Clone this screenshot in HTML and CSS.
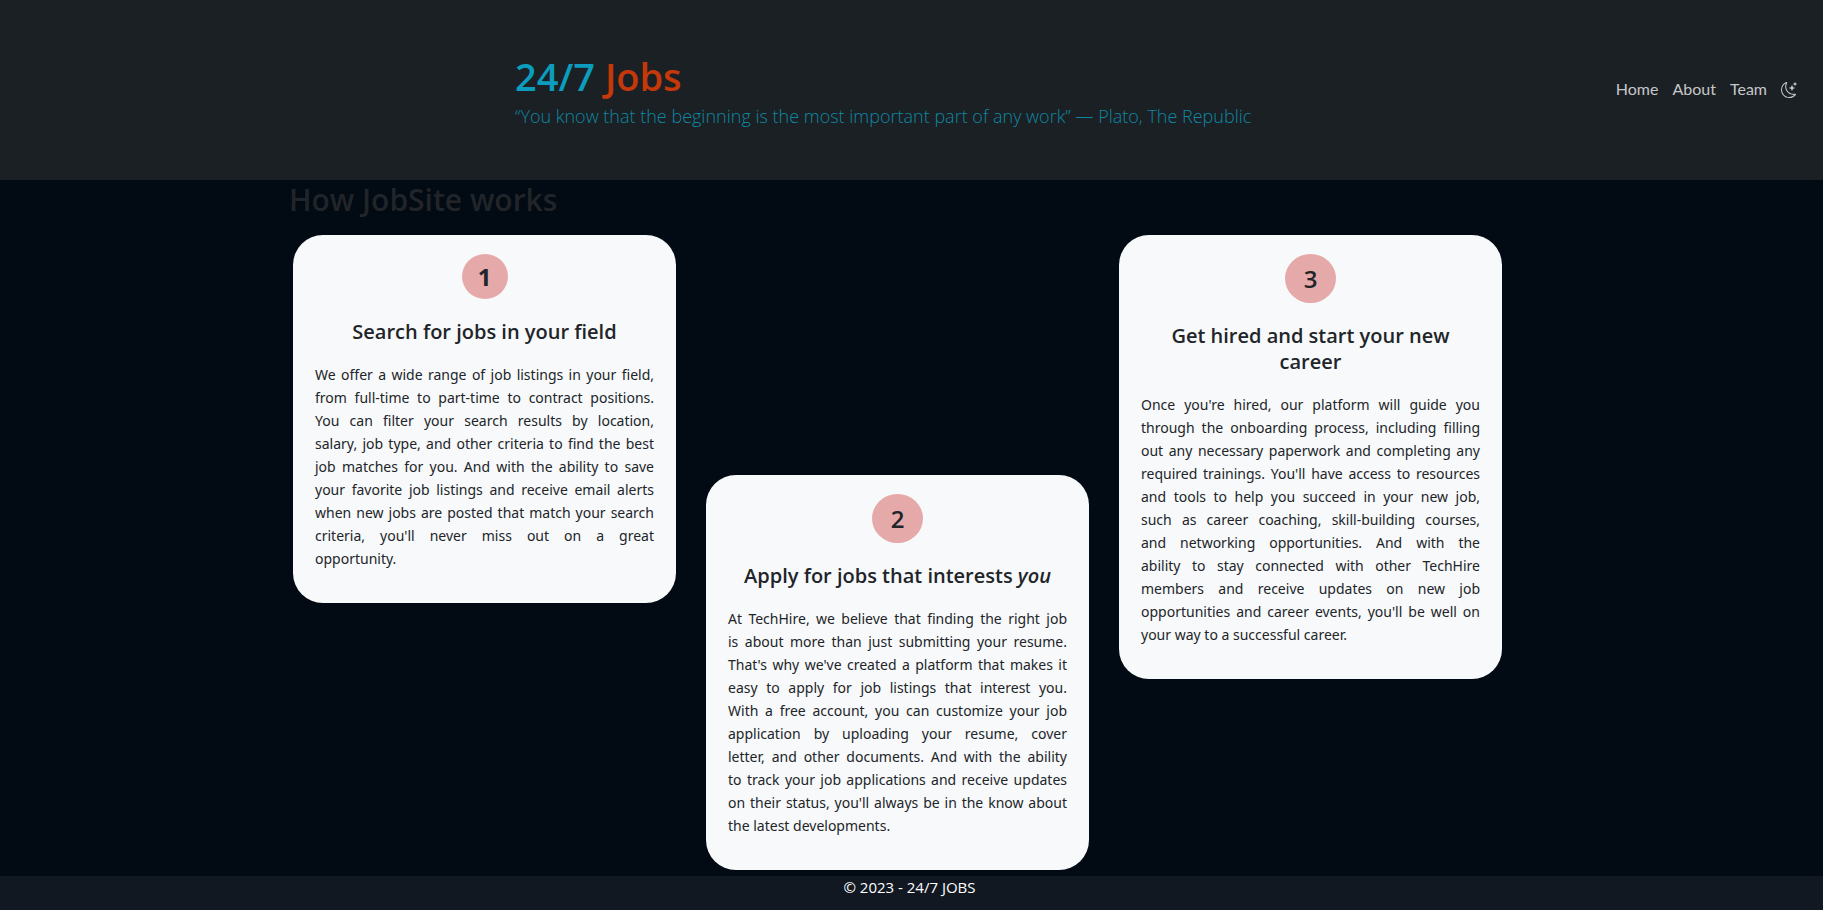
FILE: index.html
```html
<!DOCTYPE html>
<html lang="en">
<head>
<meta charset="utf-8">
<meta name="viewport" content="width=device-width, initial-scale=1">
<title>24/7 Jobs</title>
<link rel="stylesheet" href="styles.css">
</head>
<body>
<header class="site-header">
  <div class="brand">
    <h1 class="brand-name">24/7 <span class="brand-accent">Jobs</span></h1>
    <p class="tagline">“You know that the beginning is the most important part of any work” — Plato, The Republic</p>
  </div>
  <nav class="site-nav">
    <a href="#">Home</a>
    <a href="#">About</a>
    <a href="#">Team</a>
    <button class="theme-toggle" type="button" aria-label="Toggle theme">
      <svg viewBox="0 0 16 16" width="16" height="16" fill="currentColor" aria-hidden="true">
        <path d="M6 .278a.768.768 0 0 1 .08.858 7.208 7.208 0 0 0-.878 3.46c0 4.021 3.278 7.277 7.318 7.277.527 0 1.04-.055 1.533-.16a.787.787 0 0 1 .81.316.733.733 0 0 1-.031.893A8.349 8.349 0 0 1 8.344 16C3.734 16 0 12.286 0 7.71 0 4.266 2.114 1.312 5.124.06A.752.752 0 0 1 6 .278zM4.858 1.311A7.269 7.269 0 0 0 1.025 7.71c0 4.02 3.279 7.276 7.319 7.276a7.316 7.316 0 0 0 5.205-2.162c-.337.042-.68.063-1.029.063-4.61 0-8.343-3.714-8.343-8.29 0-1.167.242-2.278.681-3.286z"/>
        <path d="M10.794 3.148a.217.217 0 0 1 .412 0l.387 1.162c.173.518.579.924 1.097 1.097l1.162.387a.217.217 0 0 1 0 .412l-1.162.387a1.734 1.734 0 0 0-1.097 1.097l-.387 1.162a.217.217 0 0 1-.412 0l-.387-1.162A1.734 1.734 0 0 0 9.31 6.593l-1.162-.387a.217.217 0 0 1 0-.412l1.162-.387a1.734 1.734 0 0 0 1.097-1.097l.387-1.162zM13.863.099a.145.145 0 0 1 .274 0l.258.774c.115.346.386.617.732.732l.774.258a.145.145 0 0 1 0 .274l-.774.258a1.156 1.156 0 0 0-.732.732l-.258.774a.145.145 0 0 1-.274 0l-.258-.774a1.156 1.156 0 0 0-.732-.732l-.774-.258a.145.145 0 0 1 0-.274l.774-.258c.346-.115.617-.386.732-.732L13.863.1z"/>
      </svg>
    </button>
  </nav>
</header>
<main class="content">
  <section class="how">
    <h2 class="how-title">How JobSite works</h2>
    <div class="steps">
      <article class="card">
        <span class="step step-small">1</span>
        <h3 class="card-title">Search for jobs in your field</h3>
        <p class="card-text">We offer a wide range of job listings in your field, from full-time to part-time to contract positions. You can filter your search results by location, salary,&nbsp;job type, and other criteria to find the best job&nbsp;matches for you. And with the ability to save your&nbsp;favorite job listings and receive email alerts when&nbsp;new jobs are posted that match your search criteria, you'll never miss out on a great opportunity.</p>
      </article>
      <article class="card card-lowered">
        <span class="step">2</span>
        <h3 class="card-title">Apply for jobs that interests <em>you</em></h3>
        <p class="card-text">At TechHire, we believe that finding the right job is&nbsp;about more than just submitting your resume. That's why we've created a platform that makes it easy&nbsp;to apply for job listings that interest you. With&nbsp;a&nbsp;free account, you can customize your job application by uploading your resume, cover letter,&nbsp;and other documents. And with the ability to&nbsp;track your job applications and receive updates on&nbsp;their status, you'll always be in the know about the&nbsp;latest developments.</p>
      </article>
      <article class="card">
        <span class="step">3</span>
        <h3 class="card-title">Get hired and start your new career</h3>
        <p class="card-text">Once you're hired, our platform will guide you through the onboarding process, including filling out any necessary paperwork and completing any required trainings. You'll have access to resources and tools to help you succeed in your new job, such&nbsp;as career coaching, skill-building courses, and&nbsp;networking opportunities. And with the ability&nbsp;to&nbsp;stay connected with other TechHire members&nbsp;and&nbsp;receive updates on new job opportunities and career events, you'll be well on your&nbsp;way to a successful career.</p>
      </article>
    </div>
  </section>
</main>
<footer class="site-footer">© 2023 - 24/7 JOBS</footer>
</body>
</html>
```
FILE: styles.css
```css
* {
  box-sizing: border-box;
}

body {
  margin: 0;
  min-height: 100vh;
  display: flex;
  flex-direction: column;
  background: #020a13;
  color: #212529;
  font-family: "Open Sans", "Noto Sans", sans-serif;
  font-size: 15px;
  line-height: 23px;
}

h1, h2, h3, p {
  margin: 0;
}

.site-header {
  display: flex;
  align-items: center;
  justify-content: space-between;
  min-height: 180px;
  padding: 0 26px 0 28.25%;
  background: #1b2024;
}

.brand-name {
  padding-top: 5px;
  color: #0b9cbe;
  font-size: 38px;
  font-weight: 600;
  line-height: 44px;
}

.brand-accent {
  color: #c4380a;
}

.tagline {
  margin-top: 3px;
  color: #0f87a3;
  font-size: 18px;
  font-weight: 300;
  line-height: 30px;
}

.site-nav {
  display: flex;
  align-items: center;
  gap: 14px;
  font-family: Lato, sans-serif;
  font-size: 16px;
}

.site-nav a {
  padding-bottom: 4px;
  color: #c6c7c8;
  text-decoration: none;
}

.theme-toggle {
  display: flex;
  padding: 0;
  border: 0;
  background: none;
  color: #c6c7c8;
  cursor: pointer;
}

.content {
  flex: 1;
  padding: 0 28px 6px 0;
}

.how {
  width: 100%;
  max-width: 1209px;
  margin: 0 auto;
}

.how-title {
  margin-left: -4px;
  padding: 1px 0 16px;
  font-size: 30px;
  font-weight: 600;
  line-height: 38px;
}

.steps {
  display: grid;
  grid-template-columns: repeat(3, 1fr);
  align-items: start;
  gap: 30px;
}

.card {
  display: flex;
  flex-direction: column;
  align-items: center;
  padding: 19px 22px 33px;
  border-radius: 30px;
  background: #f8f9fa;
}

.card-lowered {
  margin-top: 240px;
}

.step {
  display: flex;
  align-items: center;
  justify-content: center;
  width: 51px;
  height: 49px;
  border-radius: 50%;
  background: #e6a9a9;
  font-size: 24px;
  font-weight: 600;
}

.step-small {
  width: 46px;
  height: 45px;
  font-weight: 700;
}

.card-title {
  padding: 20px 0 18px;
  font-size: 20px;
  font-weight: 600;
  line-height: 26px;
  text-align: center;
}

.card-text {
  font-family: "Noto Sans", "Open Sans", sans-serif;
  font-size: 14px;
  text-align: justify;
}

.site-footer {
  min-height: 34px;
  padding-right: 4px;
  background: #111822;
  color: #fff;
  text-align: center;
}
```
